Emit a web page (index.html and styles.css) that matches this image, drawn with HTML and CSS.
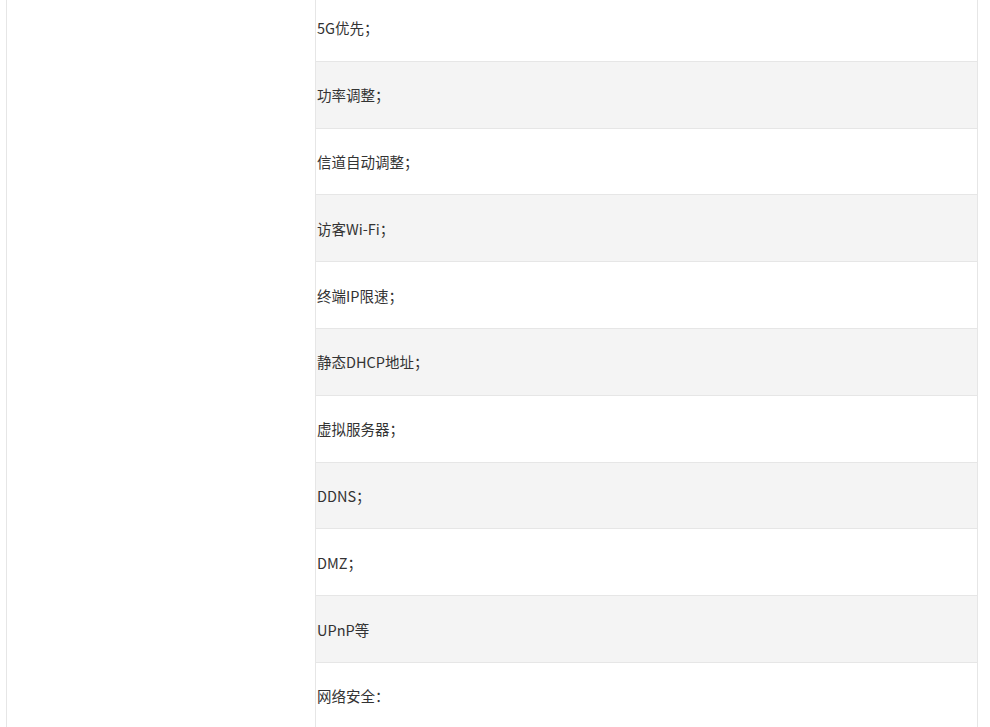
FILE: index.html
```html
<!DOCTYPE html>
<html lang="zh-CN">
<head>
<meta charset="utf-8">
<title>功能列表</title>
<link rel="stylesheet" href="styles.css">
</head>
<body>
<div class="table">
  <div class="side"></div>
  <div class="list">
    <div class="row">5G优先；</div>
    <div class="row alt">功率调整；</div>
    <div class="row">信道自动调整；</div>
    <div class="row alt">访客Wi-Fi；</div>
    <div class="row">终端IP限速；</div>
    <div class="row alt">静态DHCP地址；</div>
    <div class="row">虚拟服务器；</div>
    <div class="row alt">DDNS；</div>
    <div class="row">DMZ；</div>
    <div class="row alt">UPnP等</div>
    <div class="row">网络安全：</div>
  </div>
</div>
</body>
</html>
```

FILE: styles.css
```css
html, body {
  margin: 0;
  padding: 0;
  background: #ffffff;
}
body {
  font-family: "Microsoft YaHei", "Noto Sans CJK SC", "Noto Sans", sans-serif;
  font-size: 14.5px;
  color: #333333;
  overflow: hidden;
}
.table {
  display: flex;
  width: 970px;
  margin: -5px 0 0 6px;
  border-left: 1px solid #e6e6e6;
  border-right: 1px solid #e6e6e6;
}
.side {
  width: 308px;
  flex: none;
  border-right: 1px solid #e6e6e6;
  background: #ffffff;
}
.list {
  flex: 1;
  display: flex;
  flex-direction: column;
}
.row {
  height: 65.8px;
  display: flex;
  align-items: center;
  padding-left: 1px;
  border-bottom: 1px solid #e6e6e6;
  background: #ffffff;
  white-space: nowrap;
}
.row.alt {
  background: #f4f4f4;
}
```
